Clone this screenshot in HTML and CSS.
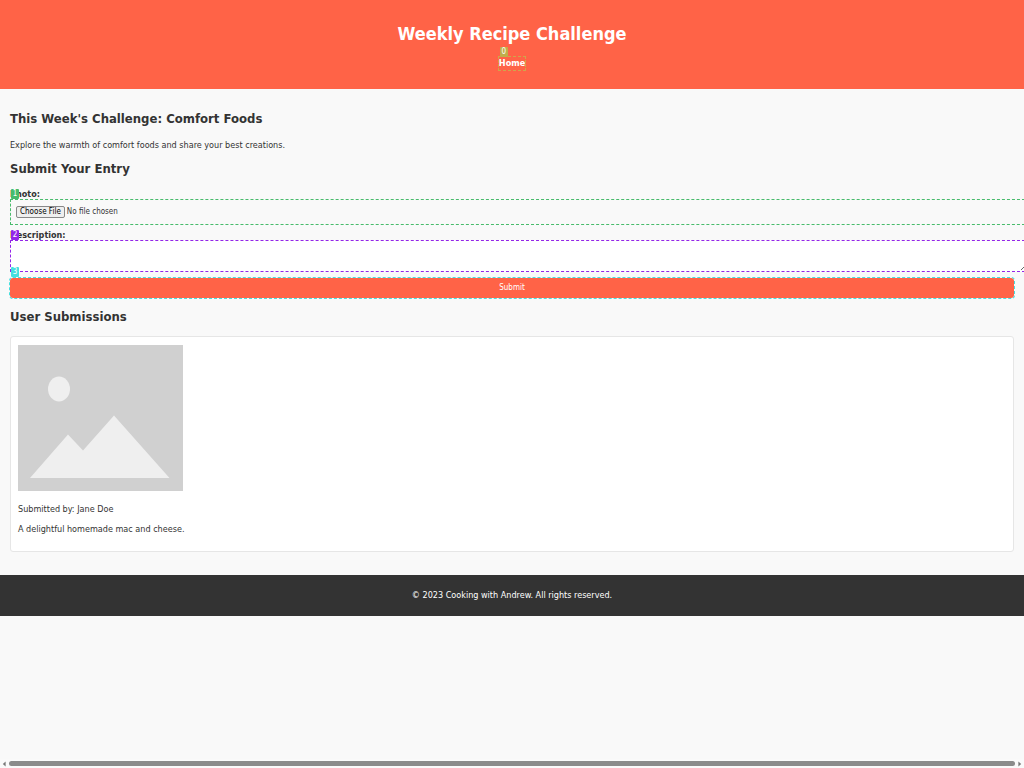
FILE: index.html
```html
<!DOCTYPE html>
<html lang="en">
<head>
<meta charset="utf-8">
<title>Weekly Recipe Challenge</title>
<link rel="stylesheet" href="styles.css">
</head>
<body>
<header class="site-header">
  <h1>Weekly Recipe Challenge</h1>
  <nav><a class="home-link" href="#">Home<span class="tag tag-home">0</span></a></nav>
</header>
<main class="content">
  <section>
    <h2>This Week's Challenge: Comfort Foods</h2>
    <p>Explore the warmth of comfort foods and share your best creations.</p>
  </section>
  <section>
    <h2>Submit Your Entry</h2>
    <form class="entry-form">
      <label for="photo">Photo:<span class="tag tag-photo">1</span></label>
      <input class="photo-input" type="file" id="photo">
      <label for="description">Description:<span class="tag tag-description">2</span></label>
      <textarea class="description-input" id="description"></textarea>
      <div class="submit-row">
        <button class="submit-button" type="submit">Submit</button>
        <span class="tag tag-submit">3</span>
      </div>
    </form>
  </section>
  <section>
    <h2>User Submissions</h2>
    <article class="submission">
      <svg class="placeholder" viewBox="0 0 165 146" role="img" aria-label="Submission photo">
        <path fill="#d0d0d0" d="M0 0h165v146H0z"/>
        <ellipse cx="41" cy="44" rx="11" ry="12.5" fill="#efefef"/>
        <path fill="#efefef" d="M12 133 50 89.500 65 105.500 96 70.500 151.500 133z"/>
      </svg>
      <p>Submitted by: Jane Doe</p>
      <p>A delightful homemade mac and cheese.</p>
    </article>
  </section>
</main>
<footer class="site-footer">© 2023 Cooking with Andrew. All rights reserved.</footer>
<div class="scrollbar" aria-hidden="true">
  <svg class="arrow" viewBox="0 0 5 6"><path d="M4.500 0v6L1 3z"/></svg>
  <div class="thumb"></div>
  <svg class="arrow" viewBox="0 0 5 6"><path d="M.5 0v6L4 3z"/></svg>
</div>
</body>
</html>
```
FILE: styles.css
```css
* { box-sizing: border-box; }

body {
  margin: 0;
  background: #f9f9f9;
  color: #333;
  font: 9px/14px "DejaVu Sans Condensed", "DejaVu Sans", sans-serif;
  overflow-x: hidden;
}

h1, h2, p { margin: 0; }

.site-header {
  padding: 20px 10px 19px;
  background: #ff6347;
  color: #fff;
  text-align: center;
}

h1 { font-size: 18px; line-height: 28px; }

.site-header nav {
  display: flex;
  justify-content: center;
  padding: 9px 0 0;
}

.home-link {
  position: relative;
  display: block;
  outline: 1px dashed #d0a54a;
  color: #fff;
  font-weight: bold;
  line-height: 13px;
  text-decoration: none;
}

.content { padding: 19px 10px 23px; }

h2 { font-size: 13px; line-height: 22px; margin-bottom: 8px; }

p { margin-bottom: 6px; }

.entry-form { display: flex; flex-direction: column; }

label {
  position: relative;
  align-self: flex-start;
  padding-top: 2px;
  font-weight: bold;
  line-height: 9px;
}

.photo-input,
.description-input {
  display: block;
  width: calc(100% + 16px);
  font: inherit;
}

.photo-input {
  height: 26px;
  margin: 0 0 4px;
  padding: 6px 5px;
  border: 1px dashed #48bb6c;
  color: #333;
  font-size: 8px;
  line-height: 12px;
}

.photo-input::file-selector-button {
  height: 12px;
  margin: 0 2px 0 0;
  padding: 0 3px;
  border: 1px solid #888;
  border-radius: 2px;
  background: #efefef;
  color: #000;
  font: inherit;
  line-height: 10px;
}

.description-input {
  height: 32px;
  margin: 0 0 6px;
  padding: 5px;
  border: 1px dashed #9326e8;
  background: #fff;
}

.submit-row { position: relative; margin-bottom: 8px; }

.submit-button {
  display: block;
  width: 100%;
  height: 20px;
  padding: 0;
  border: 0;
  border-radius: 3px;
  outline: 1px dashed #45dfdf;
  background: #ff6347;
  color: #fff;
  font: inherit;
  font-size: 8px;
}

.tag {
  position: absolute;
  left: 1px;
  width: 8px;
  height: 10px;
  border-radius: 1px;
  color: #fff;
  font-size: 8px;
  font-weight: normal;
  line-height: 10px;
  text-align: center;
}

.tag-home { top: -10px; background: #bfae4a; }
.tag-photo { top: 1px; background: #48bb6c; }
.tag-description { top: 1px; background: #9326e8; }
.tag-submit { top: -11px; background: #45dfdf; }

.submission {
  padding: 8px 7px 9px;
  border: 1px solid #e6e6e6;
  border-radius: 3px;
  background: #fff;
}

.placeholder { display: block; width: 165px; height: 146px; margin-bottom: 11px; }

.site-footer {
  padding: 13px 10px 14px;
  background: #333;
  color: #fff;
  text-align: center;
}

.scrollbar {
  position: fixed;
  inset: auto 0 0;
  display: flex;
  align-items: center;
  gap: 3px;
  height: 9px;
  padding: 0 2px;
  background: #fafafa;
}

.arrow { width: 4px; height: 6px; fill: #777; }
.thumb { flex: 1; height: 5px; border-radius: 3px; background: #8b8b8b; }
```
